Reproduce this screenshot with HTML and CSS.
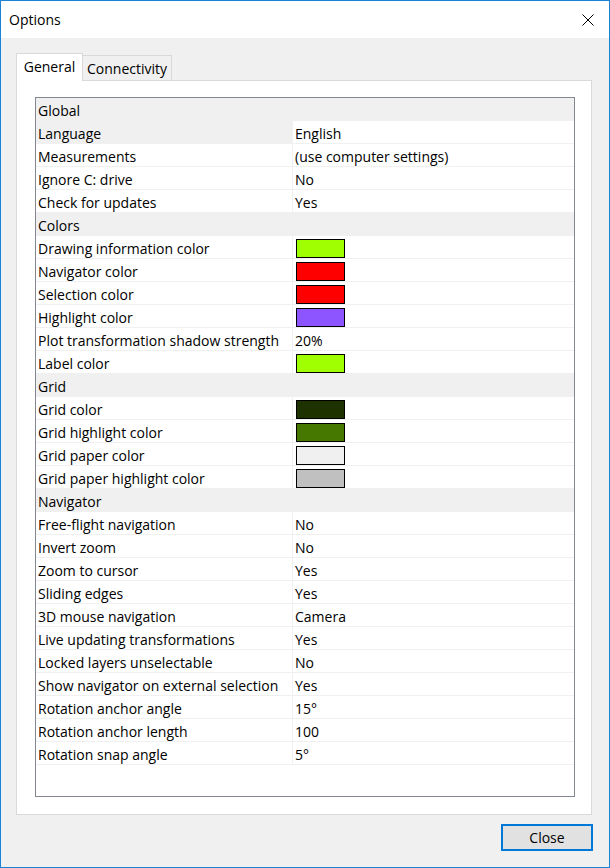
FILE: index.html
```html
<!DOCTYPE html>
<html>
<head>
<meta charset="utf-8">
<link rel="stylesheet" href="styles.css">
</head>
<body>
<div class="window">
  <div class="titlebar">
    <span class="title">Options</span>
    <svg class="close-x" width="12" height="12" viewBox="0 0 12 12"><path d="M0.5 0.5L11.5 11.5M11.5 0.5L0.5 11.5" stroke="#000" stroke-width="1" fill="none"/></svg>
  </div>
  <div class="client">
    <div class="tabs">
      <div class="tab active">General</div>
      <div class="tab">Connectivity</div>
    </div>
    <div class="panel">
      <div class="grid">
        <div class="cat">Global</div>
        <div class="row selected"><div class="label">Language</div><div class="value">English</div></div>
        <div class="row"><div class="label">Measurements</div><div class="value">(use computer settings)</div></div>
        <div class="row"><div class="label">Ignore C: drive</div><div class="value">No</div></div>
        <div class="row"><div class="label">Check for updates</div><div class="value">Yes</div></div>
        <div class="cat">Colors</div>
        <div class="row"><div class="label">Drawing information color</div><div class="value"><span class="swatch sw-lime"></span></div></div>
        <div class="row"><div class="label">Navigator color</div><div class="value"><span class="swatch sw-red"></span></div></div>
        <div class="row"><div class="label">Selection color</div><div class="value"><span class="swatch sw-red"></span></div></div>
        <div class="row"><div class="label">Highlight color</div><div class="value"><span class="swatch sw-purple"></span></div></div>
        <div class="row"><div class="label">Plot transformation shadow strength</div><div class="value">20%</div></div>
        <div class="row"><div class="label">Label color</div><div class="value"><span class="swatch sw-lime"></span></div></div>
        <div class="cat">Grid</div>
        <div class="row"><div class="label">Grid color</div><div class="value"><span class="swatch sw-dark"></span></div></div>
        <div class="row"><div class="label">Grid highlight color</div><div class="value"><span class="swatch sw-green"></span></div></div>
        <div class="row"><div class="label">Grid paper color</div><div class="value"><span class="swatch sw-paper"></span></div></div>
        <div class="row"><div class="label">Grid paper highlight color</div><div class="value"><span class="swatch sw-silver"></span></div></div>
        <div class="cat">Navigator</div>
        <div class="row"><div class="label">Free-flight navigation</div><div class="value">No</div></div>
        <div class="row"><div class="label">Invert zoom</div><div class="value">No</div></div>
        <div class="row"><div class="label">Zoom to cursor</div><div class="value">Yes</div></div>
        <div class="row"><div class="label">Sliding edges</div><div class="value">Yes</div></div>
        <div class="row"><div class="label">3D mouse navigation</div><div class="value">Camera</div></div>
        <div class="row"><div class="label">Live updating transformations</div><div class="value">Yes</div></div>
        <div class="row"><div class="label">Locked layers unselectable</div><div class="value">No</div></div>
        <div class="row"><div class="label">Show navigator on external selection</div><div class="value">Yes</div></div>
        <div class="row"><div class="label">Rotation anchor angle</div><div class="value">15°</div></div>
        <div class="row"><div class="label">Rotation anchor length</div><div class="value">100</div></div>
        <div class="row"><div class="label">Rotation snap angle</div><div class="value">5°</div></div>
      </div>
    </div>
    <div class="buttons">
      <button class="btn">Close</button>
    </div>
  </div>
</div>
</body>
</html>
```

FILE: styles.css
```css
html, body {
  margin: 0;
  padding: 0;
  background: #ffffff;
}

body {
  font-family: "Open Sans", "Noto Sans", "Liberation Sans", sans-serif;
  font-size: 14px;
  color: #000000;
}

.window {
  box-sizing: border-box;
  width: 610px;
  height: 868px;
  border: 1px solid #1883d7;
  display: flex;
  flex-direction: column;
  background: #f0f0f0;
}

.titlebar {
  height: 37px;
  background: #ffffff;
  display: flex;
  align-items: center;
  justify-content: space-between;
  padding: 0 15px 0 8px;
  flex: none;
}

.title {
  font-size: 14px;
  line-height: 20px;
}

.close-x {
  display: block;
}

.client {
  flex: 1;
  display: flex;
  flex-direction: column;
  padding: 15px 17px 0 15px;
}

.tabs {
  display: flex;
  align-items: flex-end;
  height: 27px;
  position: relative;
  z-index: 1;
}

.tab {
  box-sizing: border-box;
  height: 25px;
  border: 1px solid #d9d9d9;
  border-bottom: none;
  background: #f0f0f0;
  line-height: 23px;
  text-align: center;
}

.tab.active {
  width: 67px;
  height: 28px;
  margin-bottom: -1px;
  background: #ffffff;
  line-height: 26px;
}

.tab + .tab {
  width: 89px;
  border-left: none;
  padding-top: 1px;
}

.panel {
  box-sizing: border-box;
  height: 735px;
  border: 1px solid #d9d9d9;
  background: #ffffff;
  padding: 16px 16px 17px 18px;
  display: flex;
  flex-direction: column;
}

.grid {
  flex: 1;
  border: 1px solid #828790;
  background: #ffffff;
  overflow: hidden;
}

.cat {
  height: 23px;
  line-height: 25px;
  background: #f0f0f0;
  padding-left: 2px;
  overflow: visible;
}

.row {
  display: flex;
  height: 22px;
  border-bottom: 1px solid #f0f0f0;
  line-height: 26px;
}

.label {
  box-sizing: border-box;
  width: 257px;
  height: 22px;
  padding-left: 2px;
  border-right: 1px solid #f0f0f0;
  white-space: nowrap;
  flex: none;
}

.row.selected .label {
  background: #f0f0f0;
}

.value {
  flex: 1;
  height: 22px;
  padding-left: 2px;
  white-space: nowrap;
}

.swatch {
  display: block;
  box-sizing: border-box;
  width: 49px;
  height: 19px;
  margin-top: 3px;
  margin-left: 1px;
  border: 1px solid #000000;
}

.sw-lime { background: #a0ff00; }
.sw-red { background: #ff0000; }
.sw-purple { background: #8c55ff; }
.sw-dark { background: #1e3200; }
.sw-green { background: #467800; }
.sw-paper { background: #f0f0f0; }
.sw-silver { background: #c0c0c0; }

.buttons {
  display: flex;
  justify-content: flex-end;
  margin-top: 9px;
  margin-right: -1px;
}

.btn {
  box-sizing: border-box;
  width: 92px;
  height: 27px;
  border: 2px solid #0078d7;
  background: #e1e1e1;
  font-family: inherit;
  font-size: 14px;
  color: #000000;
  padding: 0;
  line-height: 23px;
}
```
